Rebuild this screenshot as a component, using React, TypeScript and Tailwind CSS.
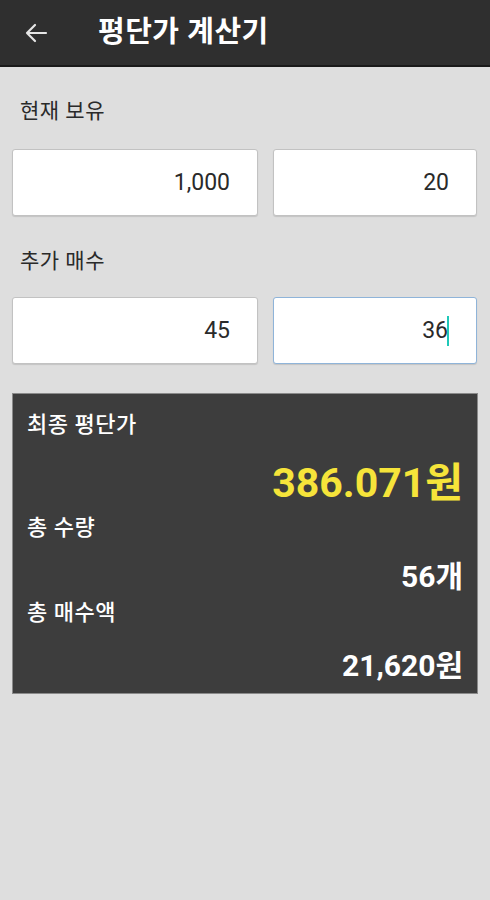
const font = 'font-["Roboto","Noto_Sans_CJK_KR",sans-serif]'

function NumberBox({ value, focused, width }: { value: string; focused?: boolean; width: string }) {
  return (
    <div
      className={`${width} h-[67px] flex items-center justify-end pr-[27px] bg-white rounded-[3px] border ${
        focused ? 'border-[#8fb4d9]' : 'border-[#c2c2c2]'
      } shadow-[0_1px_1px_rgba(0,0,0,0.12)]`}
    >
      <span className="text-[23px] text-[#2a2a2a] leading-none">{value}</span>
      {focused && <span className="w-[2px] h-[30px] bg-[#1fc8b8] -ml-[1px]" />}
    </div>
  )
}

export default function App() {
  return (
    <div className={`${font} w-[490px] h-[900px] bg-[#dedede] flex flex-col`}>
      <div className="h-[67px] bg-[#2f2f2f] border-b-2 border-[#1a1a1a] flex items-center shrink-0">
        <svg className="ml-[24px] w-[24px] h-[24px]" viewBox="0 0 24 24" fill="none" stroke="#e6e6e6" strokeWidth={2.2} strokeLinecap="round" strokeLinejoin="round">
          <path d="M22 12H3M11 4l-8 8 8 8" />
        </svg>
        <span className="ml-[50px] text-[29px] font-bold text-white tracking-[0.5px] leading-none">평단가 계산기</span>
      </div>

      <div className="px-[12px] pt-[34px]">
        <div className="pl-[8px] text-[21px] text-[#2a2a2a] leading-none tracking-[0.5px]">현재 보유</div>
        <div className="mt-[27px] flex gap-[15px]">
          <NumberBox value="1,000" width="w-[246px]" />
          <NumberBox value="20" width="w-[204px]" />
        </div>

        <div className="mt-[35px] pl-[8px] text-[21px] text-[#2a2a2a] leading-none tracking-[0.5px]">추가 매수</div>
        <div className="mt-[25px] flex gap-[15px]">
          <NumberBox value="45" width="w-[246px]" />
          <NumberBox value="36" width="w-[204px]" focused />
        </div>

        <div className="mt-[29px] h-[301px] bg-[#3d3d3d] border border-[#8a8a8a] px-[14px] pt-[20px] flex flex-col text-white">
          <div className="text-[22px] font-medium leading-none tracking-[0.5px]">최종 평단가</div>
          <div className="mt-[27px] text-right text-[41px] font-bold text-[#f6e43a] leading-none">386.071원</div>
          <div className="mt-[13px] text-[22px] font-medium leading-none tracking-[0.5px]">총 수량</div>
          <div className="mt-[23px] text-right text-[30px] font-bold leading-none">56개</div>
          <div className="mt-[10px] text-[22px] font-medium leading-none tracking-[0.5px]">총 매수액</div>
          <div className="mt-[27px] text-right text-[30px] font-bold leading-none">21,620원</div>
        </div>
      </div>
    </div>
  )
}
